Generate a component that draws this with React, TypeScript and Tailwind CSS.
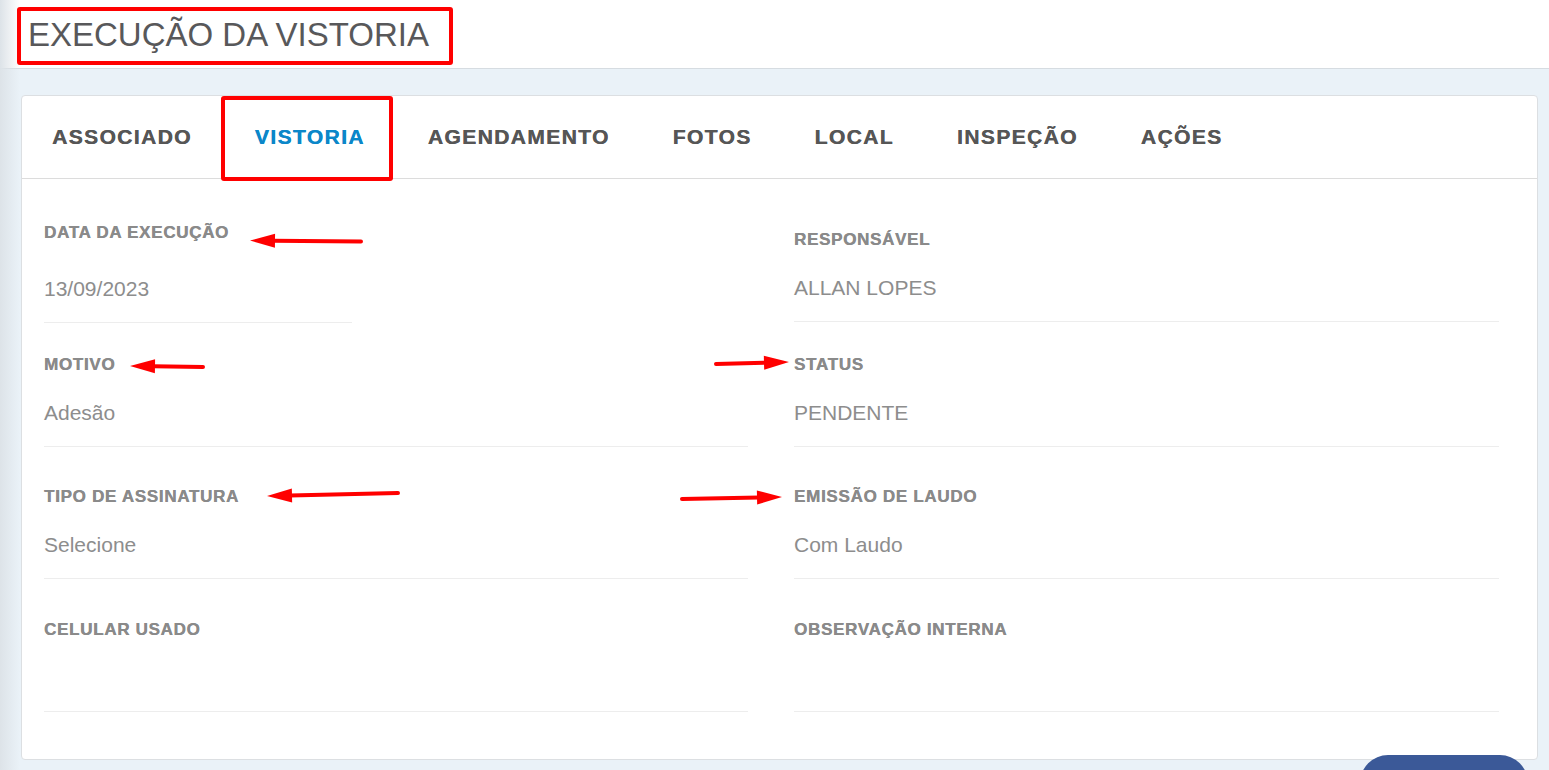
import React from "react";

type Field = {
  label: string;
  value: string;
};

const tabs = ["ASSOCIADO", "VISTORIA", "AGENDAMENTO", "FOTOS", "LOCAL", "INSPEÇÃO", "AÇÕES"];

const rows: { left: Field; right: Field; gapTop: string }[] = [
  { left: { label: "DATA DA EXECUÇÃO", value: "13/09/2023" }, right: { label: "RESPONSÁVEL", value: "ALLAN LOPES" }, gapTop: "mt-[51px]" },
  { left: { label: "MOTIVO", value: "Adesão" }, right: { label: "STATUS", value: "PENDENTE" }, gapTop: "mt-[33px]" },
  { left: { label: "TIPO DE ASSINATURA", value: "Selecione" }, right: { label: "EMISSÃO DE LAUDO", value: "Com Laudo" }, gapTop: "mt-[40px]" },
  { left: { label: "CELULAR USADO", value: "" }, right: { label: "OBSERVAÇÃO INTERNA", value: "" }, gapTop: "mt-[41px]" },
];

const labelCls =
  "h-[20px] leading-[20px] text-[17px] font-bold tracking-[0.7px] text-[#8a8a8a] [text-shadow:0.3px_0_0_currentColor]";

function FieldBlock({ field, compact }: { field: Field; compact?: boolean }) {
  if (compact) {
    // date field: label sits a little higher and the rule is shorter
    return (
      <div className="flex flex-col h-[92px] -mt-[7px]">
        <div className={labelCls}>{field.label}</div>
        <div className="mt-[31px] h-[30px] leading-[30px] text-[21px] text-[#8d8d8d]">{field.value}</div>
        <div className="mt-[18px] w-[308px] border-b border-[#ededed]" />
      </div>
    );
  }
  return (
    <div className="flex flex-col h-[92px]">
      <div className={labelCls}>{field.label}</div>
      <div className="mt-[23px] h-[30px] leading-[30px] text-[21px] text-[#8d8d8d]">{field.value}</div>
      <div className="mt-[18px] border-b border-[#ededed]" />
    </div>
  );
}

function Arrow({ tail, tip }: { tail: [number, number]; tip: [number, number] }) {
  const dx = tip[0] - tail[0];
  const dy = tip[1] - tail[1];
  const len = Math.hypot(dx, dy);
  const ux = dx / len;
  const uy = dy / len;
  const headLen = 25;
  const half = 7;
  const bx = tip[0] - ux * headLen;
  const by = tip[1] - uy * headLen;
  const px = -uy * half;
  const py = ux * half;
  return (
    <g>
      <line x1={tail[0]} y1={tail[1]} x2={bx + ux * 2} y2={by + uy * 2} stroke="#f00" strokeWidth={4} strokeLinecap="round" />
      <polygon points={`${tip[0]},${tip[1]} ${bx + px},${by + py} ${bx - px},${by - py}`} fill="#f00" />
    </g>
  );
}

export default function App() {
  return (
    <div className="relative w-[1549px] h-[770px] overflow-hidden bg-[#eaf2f8]" style={{ fontFamily: '"Liberation Sans", Arial, sans-serif' }}>
      {/* page header */}
      <header className="h-[69px] bg-white border-b border-[#d6dce1] flex items-center pl-[28px]">
        <h1 className="text-[33px] leading-none text-[#58585a] font-normal">EXECUÇÃO DA VISTORIA</h1>
      </header>

      {/* main card */}
      <div className="mt-[26px] ml-[21px] w-[1517px] bg-white border border-[#dcdfe2] rounded-[4px] pb-[47px]">
        <nav className="h-[83px] border-b border-[#dcdcdc] flex items-center">
          {tabs.map((t) => {
            const active = t === "VISTORIA";
            return (
              <div key={t} className="relative h-full flex items-center pl-[30px] pr-[33px]">
                <span
                  className={`text-[21px] font-bold tracking-[1.4px] [text-shadow:0.4px_0_0_currentColor] ${
                    active ? "text-[#0b87c9]" : "text-[#565656]"
                  }`}
                >
                  {t}
                </span>
                {active && <span className="absolute left-[-2px] right-[5px] bottom-[-1px] h-[2px] bg-[#0b87c9]" />}
              </div>
            );
          })}
        </nav>

        <div className="pl-[22px]">
          {rows.map((r, i) => (
            <div key={i} className={`${r.gapTop} grid grid-cols-[704px_705px] gap-x-[46px]`}>
              <FieldBlock field={r.left} compact={i === 0} />
              <FieldBlock field={r.right} />
            </div>
          ))}
        </div>
      </div>

      {/* soft sidebar shadow on the left edge */}
      <div className="absolute left-0 top-0 h-full w-[20px] bg-gradient-to-r from-[#dde3e8] to-transparent pointer-events-none" />

      {/* floating action button */}
      <button className="absolute left-[1360px] top-[755px] w-[168px] h-[56px] rounded-full bg-[#3b5998]" />

      {/* highlight marks */}
      <div className="absolute left-[17px] top-[7px] w-[436px] h-[58px] border-4 border-[#f00] rounded-[3px] pointer-events-none" />
      <div className="absolute left-[221px] top-[96px] w-[172px] h-[85px] border-4 border-[#f00] rounded-[3px] pointer-events-none" />
      <svg className="absolute left-0 top-0 pointer-events-none" width={1549} height={770}>
        <Arrow tail={[361, 241.5]} tip={[250, 240.5]} />
        <Arrow tail={[203, 367]} tip={[130, 366]} />
        <Arrow tail={[716, 364]} tip={[789, 362]} />
        <Arrow tail={[398, 493]} tip={[267, 496]} />
        <Arrow tail={[682, 499]} tip={[782, 497]} />
      </svg>
    </div>
  );
}
